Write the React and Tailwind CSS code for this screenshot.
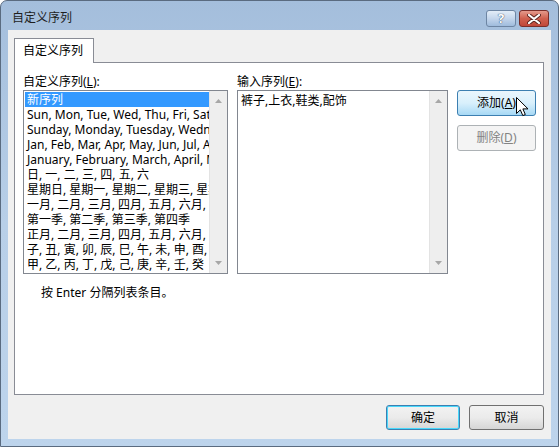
import React from 'react'

const FONT = { fontFamily: '"Segoe UI", "Noto Sans", "Noto Sans CJK SC", sans-serif' }

const LISTS = [
  '新序列',
  'Sun, Mon, Tue, Wed, Thu, Fri, Sat',
  'Sunday, Monday, Tuesday, Wednesday, Thursday, Friday, Saturday',
  'Jan, Feb, Mar, Apr, May, Jun, Jul, Aug, Sep, Oct, Nov, Dec',
  'January, February, March, April, May, June, July, August, September, October, November, December',
  '日, 一, 二, 三, 四, 五, 六',
  '星期日, 星期一, 星期二, 星期三, 星期四, 星期五, 星期六',
  '一月, 二月, 三月, 四月, 五月, 六月, 七月, 八月, 九月, 十月, 十一月, 十二月',
  '第一季, 第二季, 第三季, 第四季',
  '正月, 二月, 三月, 四月, 五月, 六月, 七月, 八月, 九月, 十月, 冬月, 腊月',
  '子, 丑, 寅, 卯, 辰, 巳, 午, 未, 申, 酉, 戌, 亥',
  '甲, 乙, 丙, 丁, 戊, 己, 庚, 辛, 壬, 癸',
]

/* ── scrollbar (disabled look) ───────────────────────────────────── */
function Scrollbar() {
  return (
    <div className="w-[18px] h-full bg-[#eeeeee] border-l border-[#e3e3e3] flex flex-col items-center justify-between py-[8px]">
      <svg width="7" height="4" viewBox="0 0 7 4"><path d="M0 4 L3.5 0 L7 4 Z" fill="#a7a7a7" /></svg>
      <svg width="7" height="4" viewBox="0 0 7 4"><path d="M0 0 L3.5 4 L7 0 Z" fill="#a7a7a7" /></svg>
    </div>
  )
}

function Btn({ children, variant = 'normal', className = '' }) {
  const styles = {
    normal: 'border-[#707070] bg-gradient-to-b from-[#f2f2f2] via-[#ebebeb] to-[#d6d6d6] text-black',
    hot: 'border-[#3c7fb1] bg-gradient-to-b from-[#eaf6fd] via-[#d9f0fc] to-[#a7d9f5] text-black',
    default: 'border-[#3c7fb1] bg-gradient-to-b from-[#f2f2f2] via-[#ebebeb] to-[#d6d6d6] text-black shadow-[inset_0_0_0_1px_#48d8fb]',
    disabled: 'border-[#adb2b5] bg-[#f4f4f4] text-[#838383]',
  }
  return (
    <div className={`flex items-center justify-center rounded-[3px] border text-[12px] ${styles[variant]} ${className}`}>
      {children}
    </div>
  )
}

function Cursor() {
  return (
    <svg className="absolute left-[516px] top-[97px]" width="13" height="20" viewBox="0 0 13 20">
      <path d="M0.5 0.5 L0.5 16.5 L4.3 12.8 L6.8 18.6 L9.3 17.5 L6.9 11.9 L12 11.9 Z"
            fill="#fff" stroke="#000" strokeWidth="1" strokeLinejoin="round" />
    </svg>
  )
}

export default function App() {
  return (
    <div style={FONT} className="relative w-[559px] h-[447px] overflow-hidden">
      <div className="w-full h-full rounded-t-[7px] border border-[#5a6b80] bg-gradient-to-b from-[#a4bedc] via-[#b8cfe8] to-[#bdd4ec] flex flex-col">
        {/* Title bar */}
        <div className="h-[29px] flex items-start justify-between pl-[11px] pr-[9px]">
          <span className="mt-[9px] text-[12px] leading-[16px] text-[#1e1e1e]">自定义序列</span>
          <div className="flex mt-[9px] gap-[3px]">
            <div className="w-[30px] h-[17px] rounded-[3px] border border-[#6d85a3] bg-gradient-to-b from-[#e3edf8] via-[#c4d6ec] to-[#9fbbdc] flex items-center justify-center">
              <span className="text-[13px] leading-none font-bold text-white [text-shadow:0_0_1px_#344a66,0_0_1px_#344a66]">?</span>
            </div>
            <div className="w-[30px] h-[17px] rounded-[3px] border border-[#7a2e2a] bg-gradient-to-b from-[#e49a8c] via-[#d0604f] to-[#c0473a] flex items-center justify-center">
              <svg width="14" height="10" viewBox="0 0 14 10">
                <path d="M2 1 L12 9 M12 1 L2 9" stroke="#5a2520" strokeWidth="4" strokeLinecap="round" />
                <path d="M2 1 L12 9 M12 1 L2 9" stroke="#fff" strokeWidth="2.2" strokeLinecap="round" />
              </svg>
            </div>
          </div>
        </div>

        {/* Client area */}
        <div className="mx-[7px] h-[409px] bg-[#f0f0f0] flex flex-col">
          {/* Tab header */}
          <div className="pl-[6px] pt-[8px] flex">
            <div className="relative z-10 w-[80px] h-[25px] -mb-px bg-white border border-b-0 border-[#898c95] flex items-center pl-[8px] text-[12px] text-black">
              自定义序列
            </div>
          </div>

          {/* Tab panel */}
          <div className="ml-[6px] w-[530px] h-[333px] bg-white border border-[#898c95] pt-[11px] pl-[8px] text-[12px] text-black">
            <div className="flex gap-[9px]">
              {/* Left list */}
              <div className="w-[205px] flex flex-col">
                <div className="h-[16px] leading-[16px]">自定义序列(<span className="underline">L</span>):</div>
                <div className="h-[184px] border border-[#828790] flex">
                  <div className="flex-1 min-w-0 pt-[1px] pl-[1px] overflow-hidden">
                    {LISTS.map((t, i) => (
                      <div key={i}
                           className={`h-[15px] leading-[15px] pl-[2px] whitespace-nowrap overflow-hidden ${i === 0 ? 'bg-[#3399ff] text-white' : ''}`}>
                        {t}
                      </div>
                    ))}
                  </div>
                  <Scrollbar />
                </div>
              </div>

              {/* Right input */}
              <div className="w-[211px] flex flex-col">
                <div className="h-[16px] leading-[16px]">输入序列(<span className="underline">E</span>):</div>
                <div className="h-[184px] border border-[#828790] flex">
                  <div className="flex-1 pl-[3px] pt-[2px] leading-[16px]">裤子,上衣,鞋类,配饰</div>
                  <Scrollbar />
                </div>
              </div>

              {/* Buttons */}
              <div className="pt-[16px] flex flex-col gap-[9px]">
                <Btn variant="hot" className="w-[79px] h-[26px]">添加(<span className="underline">A</span>)</Btn>
                <Btn variant="disabled" className="w-[79px] h-[26px]">删除(<span className="underline">D</span>)</Btn>
              </div>
            </div>

            <div className="mt-[11px] pl-[18px] leading-[16px]">按 Enter 分隔列表条目。</div>
          </div>

          {/* Footer */}
          <div className="flex justify-end gap-[9px] pt-[10px] pr-[7px]">
            <Btn variant="default" className="w-[74px] h-[25px]">确定</Btn>
            <Btn className="w-[75px] h-[25px]">取消</Btn>
          </div>
        </div>
      </div>
      <Cursor />
    </div>
  )
}
